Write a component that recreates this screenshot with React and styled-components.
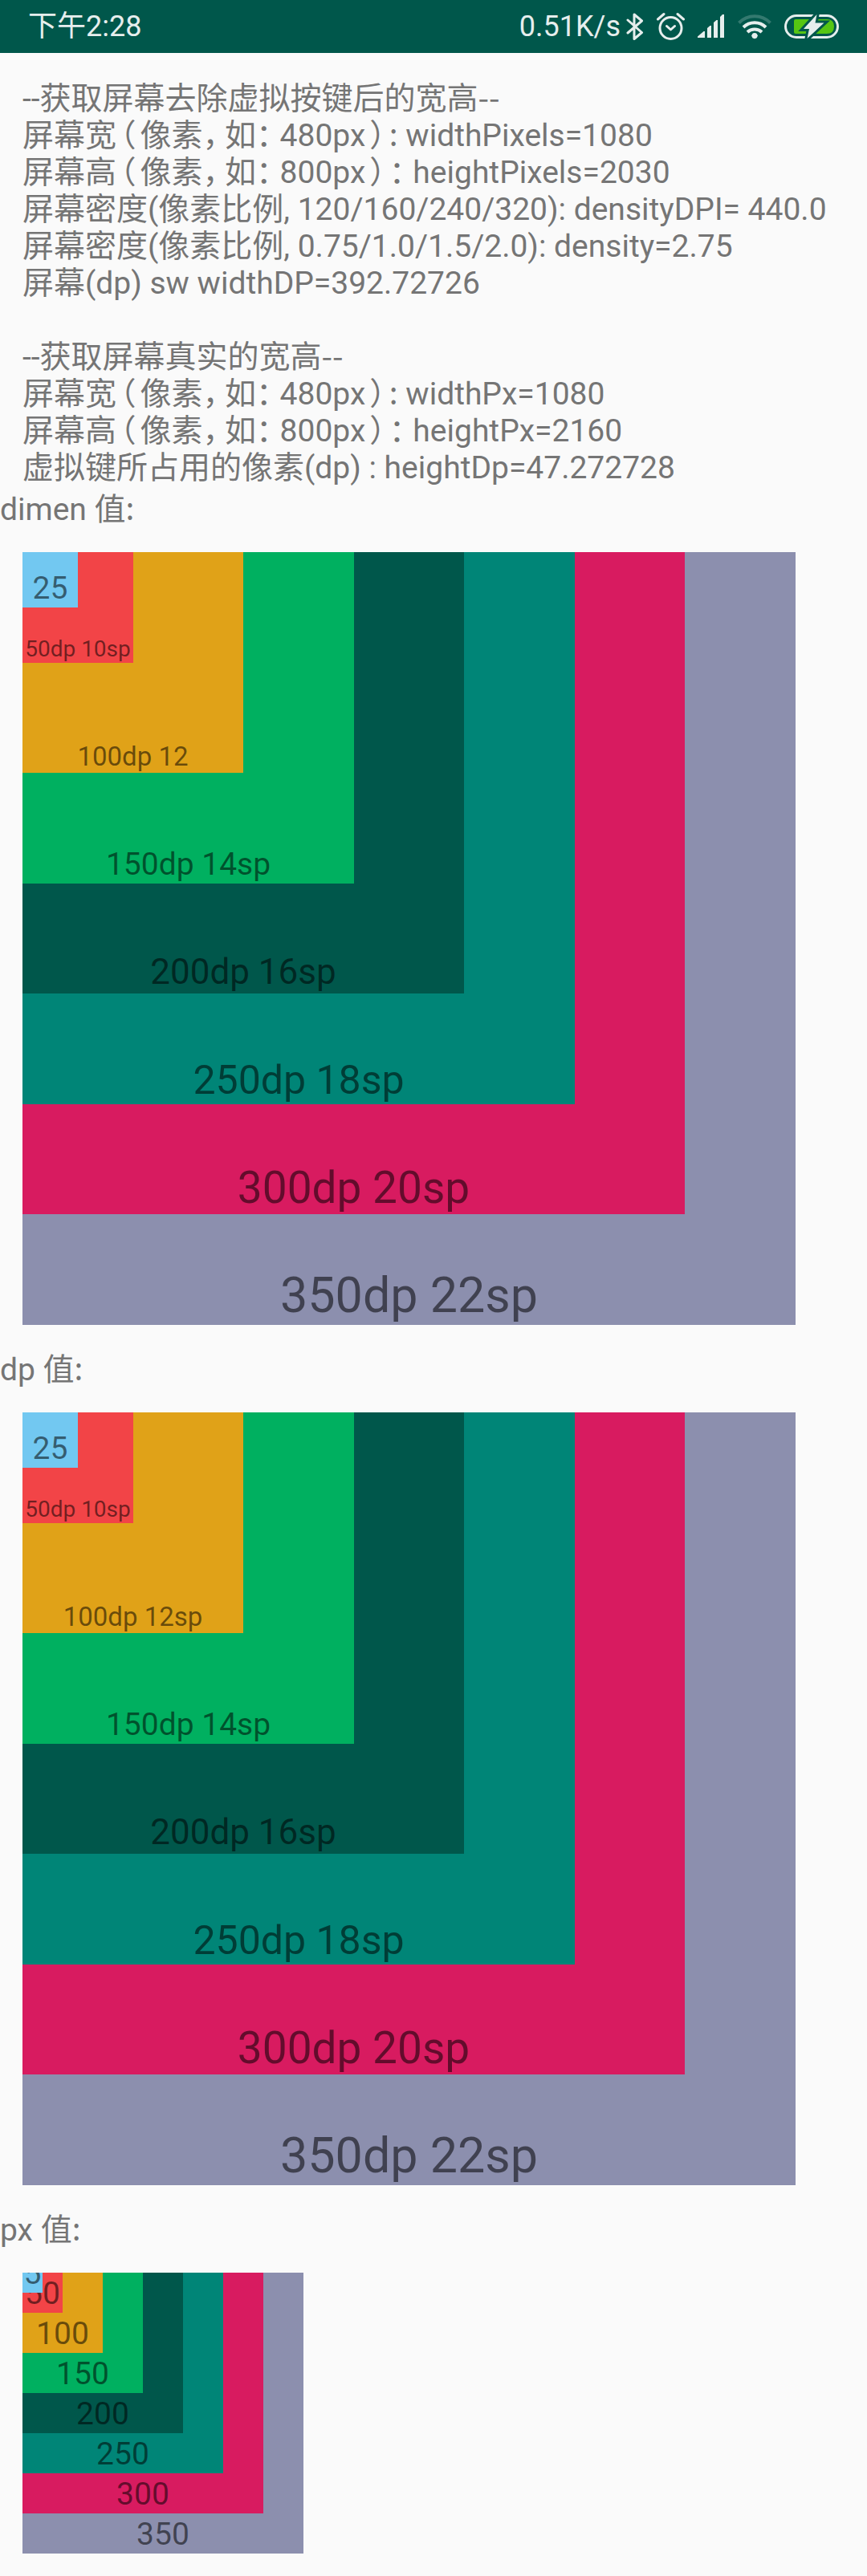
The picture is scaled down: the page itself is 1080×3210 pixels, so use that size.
import React from "react";
import styled, { createGlobalStyle } from "styled-components";

const GlobalStyle = createGlobalStyle`
  * {
    box-sizing: border-box;
  }
  body {
    margin: 0;
    background: #fafafa;
    color: #757575;
    font-family: Roboto, "Noto Sans CJK SC", sans-serif;
    font-size: 39px;
  }
`;

const StatusBar = styled.header`
  display: flex;
  align-items: center;
  justify-content: space-between;
  height: 66px;
  padding: 0 35px;
  background: #00574b;
  color: #e6eeed;
  font-size: 36px;
  line-height: 66px;
`;

const StatusGroup = styled.div`
  display: flex;
  align-items: center;
  gap: 7px;
`;

const Icons = styled.div`
  display: flex;
  align-items: center;
  gap: 16px;

  svg {
    display: block;
  }
`;

const Info = styled.section`
  margin: 28px 28px 0;
  padding: 6px 0 1px;
`;

const Line = styled.p`
  min-height: 46px;
  margin: 0;
  line-height: 46px;
  white-space: nowrap;
`;

const Han = styled.span`
  font-family: "Noto Sans CJK SC", sans-serif;
  line-height: 1;
`;

const Mark = styled(Han)`
  padding: 0 5px;
  font-feature-settings: "halt";
`;

const Comma = styled(Mark)`
  padding: 0 8px 0 0;
`;

const Colon = styled(Mark)`
  padding: 0 10px 0 0;
`;

const Label = styled.h2`
  margin: 0;
  padding-top: 3px;
  font-size: 39px;
  font-weight: 400;
  line-height: 50px;
`;

const Board = styled.div`
  display: grid;
  justify-content: start;
  margin: 28px;
`;

const Swatch = styled.div`
  grid-area: 1 / 1;
  display: flex;
  align-items: flex-end;
  justify-content: center;
  width: ${(p) => p.$size}px;
  height: ${(p) => p.$size}px;
  overflow: hidden;
  background: ${(p) => p.$color};
  color: rgba(0, 0, 0, 0.54);
  font-size: ${(p) => p.$font}px;
  line-height: 1.2;
  text-align: center;
  word-break: break-all;
`;

const COLORS = ["#8c8fae", "#d81b60", "#008577", "#00574b", "#00b060", "#e0a218", "#f24447", "#72c8f1"];
const DP_SIZES = [963, 825, 688, 550, 413, 275, 138, 69];
const PX_SIZES = [350, 300, 250, 200, 150, 100, 50, 25];
const DP_FONTS = [61, 55, 50, 44, 39, 33, 28, 39];

const dpTexts = (hundred) => [
  "350dp 22sp",
  "300dp 20sp",
  "250dp 18sp",
  "200dp 16sp",
  "150dp 14sp",
  hundred,
  "50dp 10sp",
  "25",
];

function Squares({ sizes, texts, fonts }) {
  return (
    <Board>
      {sizes.map((size, i) => (
        <Swatch key={size} $size={size} $color={COLORS[i]} $font={fonts ? fonts[i] : 39}>
          <span>{texts[i]}</span>
        </Swatch>
      ))}
    </Board>
  );
}

function Hint({ value }) {
  return (
    <>
      <Mark>（</Mark>像素<Comma>，</Comma>如<Colon>：</Colon>{value}<Mark>）</Mark>
    </>
  );
}

function Bluetooth() {
  return (
    <svg width="22" height="36" viewBox="0 0 22 36" fill="none" stroke="#e6eeed" strokeWidth="3" strokeLinejoin="round" strokeLinecap="round" aria-label="Bluetooth">
      <path d="M2 10 19.500 25.500 10 33.500V3L19.500 11 2 26" />
    </svg>
  );
}

function Alarm() {
  return (
    <svg width="35" height="36" viewBox="0 0 35 36" fill="none" stroke="#e6eeed" strokeWidth="3" strokeLinecap="round" strokeLinejoin="round" aria-label="Alarm">
      <circle cx="17.500" cy="20" r="13.500" />
      <path d="M12.500 17.500l5 4.500 5-4.500M1.500 9 9 2.500M33.500 9 26 2.500" />
    </svg>
  );
}

function Signal() {
  return (
    <svg width="34" height="30" viewBox="0 0 34 30" fill="#e6eeed" aria-label="Signal">
      <path d="M0 29v-1.500L7.500 21H9v8zM12 29V17l3.500-3H17v15zM20 29V10l3.500-3H25v22zM28 29V3l3-3h2v29z" />
    </svg>
  );
}

function Wifi() {
  return (
    <svg width="42" height="32" viewBox="0 0 42 32" fill="none" stroke="#e6eeed" strokeWidth="4" aria-label="Wi-Fi">
      <path d="M1.500 11.500A27 27 0 0 1 40.500 11.500" stroke="#33796f" />
      <path d="M7 17A20 20 0 0 1 35 17M12 23A13 13 0 0 1 30 23" />
      <path d="M17 27.500Q21 23 25 27.500L21 31.500Z" fill="#e6eeed" stroke="none" />
      <circle cx="21" cy="27.500" r="3.500" fill="#e6eeed" stroke="none" />
    </svg>
  );
}

function Battery() {
  return (
    <svg width="68" height="32" viewBox="0 0 68 32" aria-label="Charging">
      <rect x="1.500" y="2.500" width="65" height="27" rx="13.500" fill="none" stroke="#e6eeed" strokeWidth="3" />
      <path d="M14 7H53Q62 7 62 16T53 25H14Q12 25 12 23V9Q12 7 14 7Z" fill="#56c513" />
      <path d="M40.500 1 24 19H31L28.500 31 49.500 11.500H38.500Z" fill="#e6eeed" stroke="#00574b" strokeWidth="6" paintOrder="stroke" />
    </svg>
  );
}

export default function App() {
  return (
    <>
      <GlobalStyle />
      <StatusBar>
        <time>下午2:28</time>
        <StatusGroup>
          <span>0.51K/s</span>
          <Icons>
            <Bluetooth />
            <Alarm />
            <Signal />
            <Wifi />
            <Battery />
          </Icons>
        </StatusGroup>
      </StatusBar>
      <main>
        <Info>
          <Line>--获取屏幕去除虚拟按键后的宽高<Han>--</Han></Line>
          <Line>屏幕宽<Hint value="480px" /><Han>:</Han> widthPixels=1080</Line>
          <Line>屏幕高<Hint value="800px" /><Colon>：</Colon>heightPixels=2030</Line>
          <Line>屏幕密度(像素比例, 120/160/240/320): densityDPI= 440.0</Line>
          <Line>屏幕密度(像素比例, 0.75/1.0/1.5/2.0): density=2.75</Line>
          <Line>屏幕(dp) sw widthDP=392.72726</Line>
          <Line />
          <Line>--获取屏幕真实的宽高<Han>--</Han></Line>
          <Line>屏幕宽<Hint value="480px" /><Han>:</Han> widthPx=1080</Line>
          <Line>屏幕高<Hint value="800px" /><Colon>：</Colon>heightPx=2160</Line>
          <Line>虚拟键所占用的像素(dp) : heightDp=47.272728</Line>
        </Info>
        <Label>dimen 值<Han>:</Han></Label>
        <Squares sizes={DP_SIZES} texts={dpTexts("100dp 12")} fonts={DP_FONTS} />
        <Label>dp 值<Han>:</Han></Label>
        <Squares sizes={DP_SIZES} texts={dpTexts("100dp 12sp")} fonts={DP_FONTS} />
        <Label>px 值<Han>:</Han></Label>
        <Squares sizes={PX_SIZES} texts={PX_SIZES} />
      </main>
    </>
  );
}
